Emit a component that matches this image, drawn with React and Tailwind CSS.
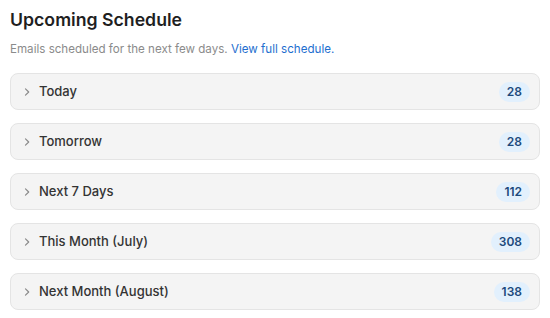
import React from "react";

const rows = [
  { label: "Today", count: 28 },
  { label: "Tomorrow", count: 28 },
  { label: "Next 7 Days", count: 112 },
  { label: "This Month (July)", count: 308 },
  { label: "Next Month (August)", count: 138 },
];

function Chevron() {
  return (
    <svg width="10" height="10" viewBox="0 0 10 10" fill="none">
      <path d="M3.5 1.8 L6.7 5 L3.5 8.2" stroke="#8a8a8a" strokeWidth="1.2" strokeLinecap="round" strokeLinejoin="round" />
    </svg>
  );
}

export default function App() {
  return (
    <div className="w-[550px] h-[318px] bg-white px-[10px] pt-[8px]" style={{ fontFamily: "Inter, sans-serif" }}>
      {/* HEADER */}
      <h1 className="text-[17.7px] font-semibold text-[#1f1f1f] leading-[24px]">Upcoming Schedule</h1>
      <p className="text-[11.6px] text-[#8b8b8b] mt-[9px] leading-[16px]">
        Emails scheduled for the next few days.{" "}
        <span className="text-[#1f6fcf]">View full schedule.</span>
      </p>

      {/* ROWS */}
      <div className="flex flex-col gap-[13px] mt-[16px] w-[530px]">
        {rows.map((r) => (
          <div
            key={r.label}
            className="h-[37px] rounded-[8px] border border-[#e4e4e4] bg-[#f4f4f4] flex items-center pl-[11px] pr-[9px]"
          >
            <Chevron />
            <span className="ml-[7px] text-[13px] font-medium text-[#333333]">{r.label}</span>
            <span className="ml-auto h-[20px] px-[8px] rounded-full bg-[#e2f0fd] text-[#1d4a7c] text-[12px] font-semibold flex items-center">
              {r.count}
            </span>
          </div>
        ))}
      </div>
    </div>
  );
}
